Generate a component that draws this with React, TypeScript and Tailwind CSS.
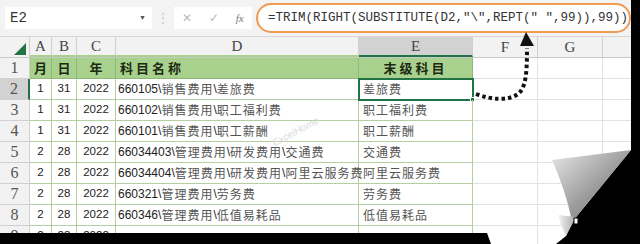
import React from "react";

// column widths: row header, A..G, tail
const COLS = ["w-[30px]", "w-[22px]", "w-[25px]", "w-[39px]", "w-[243px]", "w-[114px]", "w-[65px]", "w-[65px]", "w-[40px]"];

const rows = [
  ["1", "31", "2022", "660105\\销售费用\\差旅费", "差旅费"],
  ["1", "31", "2022", "660102\\销售费用\\职工福利费", "职工福利费"],
  ["1", "31", "2022", "660101\\销售费用\\职工薪酬", "职工薪酬"],
  ["2", "28", "2022", "66034403\\管理费用\\研发费用\\交通费", "交通费"],
  ["2", "28", "2022", "66034404\\管理费用\\研发费用\\阿里云服务费", "阿里云服务费"],
  ["2", "28", "2022", "660321\\管理费用\\劳务费", "劳务费"],
  ["2", "28", "2022", "660346\\管理费用\\低值易耗品", "低值易耗品"],
  ["2", "28", "2022", "", ""],
];

// CJK runs get extra spacing, like the wide kaiti font in the sheet
function Mixed({ text }: { text: string }) {
  const parts = text.split(/([\u4e00-\u9fff]+)/);
  return (
    <>
      {parts.map((p, i) =>
        /[\u4e00-\u9fff]/.test(p) ? (
          <span key={i} className="tracking-[1px] text-[12px] text-[#555] font-['Noto_Sans_CJK_SC',sans-serif]">
            {p}
          </span>
        ) : (
          <span key={i}>{p}</span>
        )
      )}
    </>
  );
}

function ColHeaders() {
  const letters = ["A", "B", "C", "D", "E", "F", "G", ""];
  return (
    <div className="flex h-[21px] bg-[#f2f2f2] border-b border-[#c8c8c8]">
      <div className={`${COLS[0]} relative shrink-0 border-r border-[#d0d0d0]`}>
        <div className="absolute right-[3px] bottom-[2px] w-0 h-0 border-l-[12px] border-l-transparent border-b-[12px] border-b-[#217346]" />
      </div>
      {letters.map((l, i) => (
        <div
          key={i}
          className={`${COLS[i + 1]} shrink-0 flex items-center justify-center font-['Liberation_Serif',serif] text-[15px] text-[#444] border-r border-[#d0d0d0] ${
            l === "E" ? "bg-[#d2d2d2] border-b-2 border-b-[#217346]" : ""
          } ${i < 4 ? "border-b-2 border-b-[#a9d18e]" : ""}`}
        >
          {l}
        </div>
      ))}
    </div>
  );
}

function RowHeader({ n, active }: { n: number; active?: boolean }) {
  return (
    <div
      className={`${COLS[0]} shrink-0 flex items-center justify-center font-['Liberation_Serif',serif] text-[16px] text-[#555] border-r border-b border-[#d0d0d0] ${
        active ? "bg-[#d2d2d2] border-r-2 border-r-[#217346]" : "bg-[#f2f2f2]"
      }`}
    >
      {n}
    </div>
  );
}

function EmptyTail() {
  return (
    <>
      {[7, 8, 9].map((i) => (
        <div key={i} className={`${COLS[i - 1]} shrink-0 border-r border-b border-[#e2e2e2]`} />
      ))}
    </>
  );
}

const titleCell = "shrink-0 flex items-center bg-[#a9d18e] font-bold text-[13px] text-[#1d2a12] border-r border-b border-[#8fb77a] font-['Noto_Sans_CJK_SC',sans-serif]";
const dataCell = "shrink-0 flex items-center border-r border-b border-[#b5cfa3] font-['Liberation_Sans',sans-serif] text-[11.5px] text-[#222]";

export default function App() {
  return (
    <div className="relative w-[640px] h-[244px] overflow-hidden bg-white">
      {/* formula bar */}
      <div className="flex items-center h-[37px] bg-[#f3f3f3] pl-[5px] border-b border-[#d8d8d8]">
        <div className="flex items-center justify-between w-[147px] h-[22px] bg-white pl-[5px] pr-[6px]">
          <span className="text-[14px] text-[#333] font-['Liberation_Mono',monospace]">E2</span>
          <span className="text-[7px] text-[#555]">▼</span>
        </div>
        <span className="w-[22px] text-center text-[12px] text-[#c8c8c8]">⋮</span>
        <div className="flex items-center justify-around w-[78px] h-[22px] bg-white text-[#bbb] text-[12px]">
          <span>✕</span>
          <span>✓</span>
          <span className="italic text-[11px] text-[#777] font-['Liberation_Serif',serif]">fx</span>
        </div>
        <div className="ml-[4px] flex items-center w-[375px] h-[30px] bg-white rounded-full border-2 border-[#ef9b52] pl-[10px]">
          <span className="text-[12.5px] text-[#333] whitespace-pre font-['Liberation_Mono',monospace]">
            =TRIM(RIGHT(SUBSTITUTE(D2,"\",REPT(" ",99)),99))
          </span>
        </div>
      </div>

      <ColHeaders />

      {/* row 1: titles */}
      <div className="flex h-[21px]">
        <RowHeader n={1} />
        <div className={`${COLS[1]} ${titleCell} justify-center`}>月</div>
        <div className={`${COLS[2]} ${titleCell} justify-center`}>日</div>
        <div className={`${COLS[3]} ${titleCell} justify-center`}>年</div>
        <div className={`${COLS[4]} ${titleCell} pl-[4px] tracking-[3px]`}>科目名称</div>
        <div className={`${COLS[5]} ${titleCell} justify-center tracking-[3px]`}>末级科目</div>
        <EmptyTail />
      </div>

      {rows.map((r, ri) => (
        <div key={ri} className="flex h-[21px]">
          <RowHeader n={ri + 2} active={ri === 0} />
          <div className={`${COLS[1]} ${dataCell} justify-center`}>{r[0]}</div>
          <div className={`${COLS[2]} ${dataCell} justify-center`}>{r[1]}</div>
          <div className={`${COLS[3]} ${dataCell} justify-center`}>{r[2]}</div>
          <div className={`${COLS[4]} ${dataCell} pl-[2px] text-[12px] whitespace-nowrap`}>
            <Mixed text={r[3]} />
          </div>
          <div
            className={`${COLS[5]} relative shrink-0 flex items-center pl-[4px] border-r border-b border-[#b5cfa3] ${
              ri === 0 ? "outline-2 outline-[#217346] -outline-offset-1" : ""
            }`}
          >
            <Mixed text={r[4]} />
            {ri === 0 && <div className="absolute -right-[3px] -bottom-[3px] w-[5px] h-[5px] bg-[#217346] border border-white" />}
          </div>
          <EmptyTail />
        </div>
      ))}

      {/* watermark */}
      <div className="absolute left-[270px] top-[124px] -rotate-[28deg] text-[10px] text-[#dadada] italic font-['Liberation_Sans',sans-serif]">
        ExcelHome
      </div>

      {/* dotted arrow and page curl overlay */}
      <svg className="absolute inset-0 pointer-events-none" width="640" height="244" viewBox="0 0 640 244">
        <defs>
          <linearGradient id="curl" x1="0" y1="0" x2="1" y2="1">
            <stop offset="0" stopColor="#e8e8e8" />
            <stop offset="0.55" stopColor="#9a9a9a" />
            <stop offset="1" stopColor="#6e6e6e" />
          </linearGradient>
          <linearGradient id="curl2" x1="0" y1="0" x2="1" y2="0">
            <stop offset="0" stopColor="#f4f4f4" />
            <stop offset="1" stopColor="#a8a8a8" />
          </linearGradient>
        </defs>
        <path
          d="M476 94 C492 100 508 101 518 94 C526 88 527 72 527 48"
          fill="none"
          stroke="#111"
          strokeWidth="4"
          strokeDasharray="3.5 3"
        />
        <polygon points="520,46 534,46 526,32" fill="#111" />
        <path
          fillRule="evenodd"
          fill="#000"
          d="M0 0 H640 V244 H0 Z M0 0 H631 V150 L572 222 L566 236 L556 244 H491 L487 233 H0 Z"
        />
        <path d="M552 160 L631 150 L572 222 C568 200 560 178 552 160 Z" fill="url(#curl)" />
        <path d="M558 215 L576 217 L566 236 C562 228 560 222 558 215 Z" fill="url(#curl2)" />
        <rect x="574" y="218" width="4" height="6" fill="#fff" stroke="#000" strokeWidth="1" />
      </svg>
    </div>
  );
}
